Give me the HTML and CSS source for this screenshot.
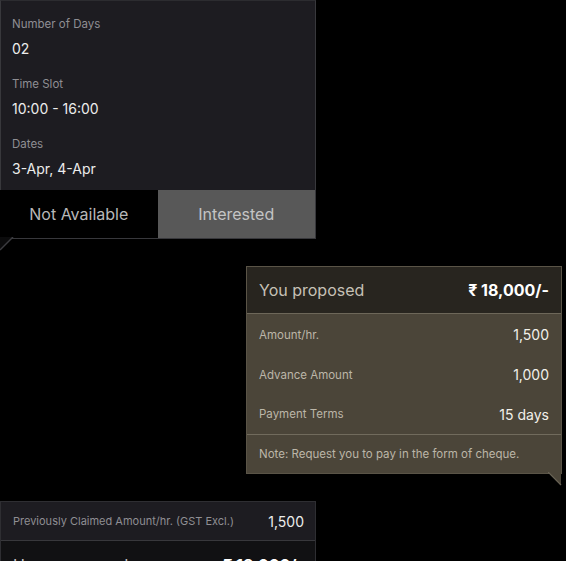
FILE: index.html
```html
<!DOCTYPE html>
<html>
<head>
<meta charset="utf-8">
<link rel="stylesheet" href="styles.css">
</head>
<body>
<div class="page">
  <div class="card slot-card">
    <div class="info">
      <div class="field">
        <div class="label">Number of Days</div>
        <div class="value">02</div>
      </div>
      <div class="field">
        <div class="label">Time Slot</div>
        <div class="value">10:00 - 16:00</div>
      </div>
      <div class="field">
        <div class="label">Dates</div>
        <div class="value">3-Apr, 4-Apr</div>
      </div>
    </div>
    <div class="actions">
      <div class="btn btn-dark">Not Available</div>
      <div class="btn btn-gray">Interested</div>
    </div>
    <svg class="tail tail-left" width="14" height="14" viewBox="0 0 14 14">
      <polygon points="0,0 13,0 0,13" fill="#0b0b0c"/>
      <line x1="13" y1="0" x2="0" y2="13" stroke="#3c3c40" stroke-width="1.4"/>
    </svg>
  </div>

  <div class="proposal-wrap">
    <div class="card proposal">
      <div class="p-head">
        <span class="p-title">You proposed</span>
        <span class="p-price">₹ 18,000/-</span>
      </div>
      <div class="p-body">
        <div class="p-row"><span class="p-label">Amount/hr.</span><span class="p-val">1,500</span></div>
        <div class="p-row"><span class="p-label">Advance Amount</span><span class="p-val">1,000</span></div>
        <div class="p-row"><span class="p-label">Payment Terms</span><span class="p-val">15 days</span></div>
      </div>
      <div class="p-note">Note: Request you to pay in the form of cheque.</div>
      <svg class="tail tail-right" width="14" height="14" viewBox="0 0 14 14">
        <polygon points="0,0 13,0 13,13" fill="#4b4539"/>
        <line x1="0" y1="0" x2="13" y2="13" stroke="#6a6456" stroke-width="1.2"/>
      </svg>
    </div>
  </div>

  <div class="card claim">
    <div class="c-row">
      <span class="c-label">Previously Claimed Amount/hr. (GST Excl.)</span>
      <span class="c-val">1,500</span>
    </div>
    <div class="c-row c-row-dark">
      <span class="c-title">Have proposed</span>
      <span class="c-price">₹ 18,000/-</span>
    </div>
  </div>
</div>
</body>
</html>
```

FILE: styles.css
```css
* { box-sizing: border-box; }
html, body {
  margin: 0;
  padding: 0;
  background: #000;
  height: 561px;
  overflow: hidden;
}
body {
  font-family: Inter, "Noto Sans", "DejaVu Sans", sans-serif;
  color: #e6e6e6;
}
.page {
  display: flex;
  flex-direction: column;
}
.card { position: relative; }

.slot-card {
  width: 316px;
  background: #1d1c21;
  border: 1px solid #38383c;
  border-top-color: #2c2c30;
}
.info {
  padding: 15px 11px 11px;
}
.field {
  display: flex;
  flex-direction: column;
  gap: 7px;
  margin-bottom: 17px;
}
.field:last-child { margin-bottom: 0; }
.label {
  font-size: 11.5px;
  line-height: 16px;
  color: #8f8e93;
}
.value {
  font-size: 14px;
  line-height: 20px;
  color: #ececec;
}
.actions {
  display: flex;
  height: 48px;
  margin: 0 0 0 -1px;
}
.btn {
  flex: 1;
  display: flex;
  align-items: center;
  justify-content: center;
  font-size: 16px;
  color: #b8b8b8;
}
.btn-dark { background: #000; }
.btn-gray { background: #585858; color: #c4c4c4; }

.tail { position: absolute; display: block; }
.tail-left { left: -1px; bottom: -13px; }

.proposal-wrap {
  display: flex;
  justify-content: flex-end;
  padding: 27px 4px 0 0;
}
.proposal {
  width: 316px;
  background: #4b4539;
  border: 1px solid #5a5447;
}
.p-head {
  height: 47px;
  background: #28251f;
  display: flex;
  align-items: center;
  justify-content: space-between;
  padding: 0 12px;
  border-bottom: 1px solid #6d6759;
}
.p-title { font-size: 16px; color: #c6c1b6; }
.p-price { font-size: 16px; font-weight: 700; color: #fff; }
.p-body {
  padding: 1px 12px 0;
  border-bottom: 1px solid #716b5d;
}
.p-row {
  display: flex;
  justify-content: space-between;
  align-items: center;
  height: 39.7px;
}
.p-label { font-size: 11.5px; color: #bcb6a8; }
.p-val { font-size: 14px; color: #f2f0ea; }
.p-note {
  font-size: 11.5px;
  color: #bcb6a8;
  padding: 0 12px;
  height: 38px;
  display: flex;
  align-items: center;
}
.tail-right { right: -1px; bottom: -13px; }

.claim {
  margin-top: 27px;
  width: 316px;
  border: 1px solid #2e2e32;
  border-bottom: none;
}
.c-row {
  display: flex;
  justify-content: space-between;
  align-items: center;
  height: 39px;
  padding: 0 11px 0 12px;
  background: #1d1c21;
  border-bottom: 1px solid #38383c;
}
.c-label { font-size: 11px; color: #8f8e93; }
.c-val { font-size: 14px; color: #ececec; }
.c-row-dark {
  background: #111113;
  border-bottom: none;
  height: 40px;
  align-items: flex-start;
  padding-top: 14px;
}
.c-title { font-size: 16px; line-height: 20px; color: #c6c6c6; }
.c-price { font-size: 16px; line-height: 20px; font-weight: 700; color: #fff; }
```
